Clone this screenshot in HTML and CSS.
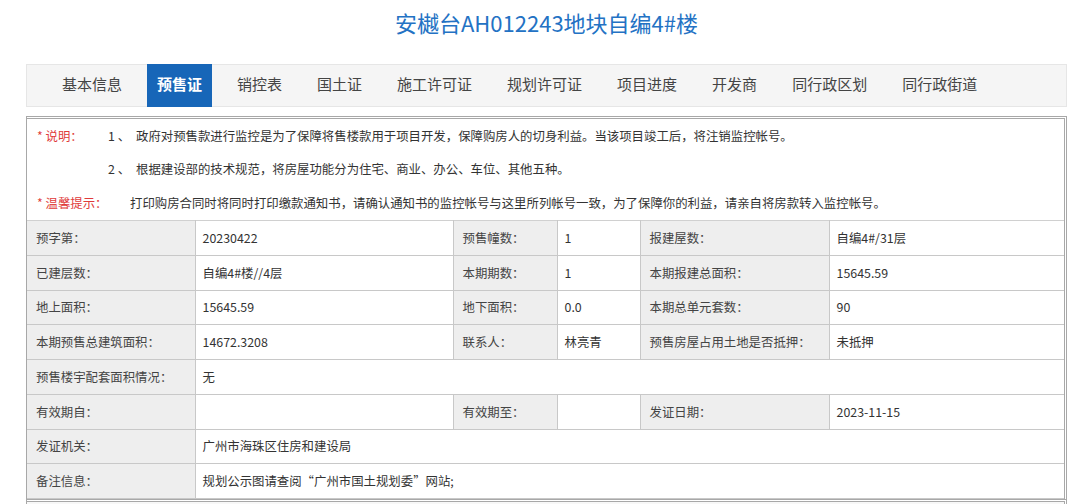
FILE: index.html
```html
<!DOCTYPE html>
<html lang="zh-CN">
<head>
<meta charset="utf-8">
<title>安樾台AH012243地块自编4#楼</title>
<link rel="stylesheet" href="styles.css">
</head>
<body>
<div class="page">
  <h1 class="title">安樾台AH012243地块自编4#楼</h1>
  <nav class="tabs">
    <a class="tab">基本信息</a>
    <a class="tab active">预售证</a>
    <a class="tab">销控表</a>
    <a class="tab">国土证</a>
    <a class="tab">施工许可证</a>
    <a class="tab">规划许可证</a>
    <a class="tab">项目进度</a>
    <a class="tab">开发商</a>
    <a class="tab">同行政区划</a>
    <a class="tab">同行政街道</a>
  </nav>
  <div class="panel">
    <div class="notes">
      <div class="note"><span class="note-label">* 说明：</span><span class="note-num">1 、</span><span>政府对预售款进行监控是为了保障将售楼款用于项目开发，保障购房人的切身利益。当该项目竣工后，将注销监控帐号。</span></div>
      <div class="note"><span class="note-label"></span><span class="note-num">2 、</span><span>根据建设部的技术规范，将房屋功能分为住宅、商业、办公、车位、其他五种。</span></div>
      <div class="note"><span class="note-label wide">* 温馨提示：</span><span>打印购房合同时将同时打印缴款通知书，请确认通知书的监控帐号与这里所列帐号一致，为了保障你的利益，请亲自将房款转入监控帐号。</span></div>
    </div>
    <table class="info">
      <colgroup>
        <col class="c1"><col class="c2"><col class="c3"><col class="c4"><col class="c5"><col class="c6">
      </colgroup>
      <tr>
        <th>预字第：</th><td>20230422</td>
        <th>预售幢数：</th><td>1</td>
        <th>报建屋数：</th><td>自编4#/31层</td>
      </tr>
      <tr>
        <th>已建层数：</th><td>自编4#楼//4层</td>
        <th>本期期数：</th><td>1</td>
        <th>本期报建总面积：</th><td>15645.59</td>
      </tr>
      <tr>
        <th>地上面积：</th><td>15645.59</td>
        <th>地下面积：</th><td>0.0</td>
        <th>本期总单元套数：</th><td>90</td>
      </tr>
      <tr>
        <th>本期预售总建筑面积：</th><td>14672.3208</td>
        <th>联系人：</th><td>林亮青</td>
        <th>预售房屋占用土地是否抵押：</th><td>未抵押</td>
      </tr>
      <tr>
        <th>预售楼宇配套面积情况：</th><td colspan="5">无</td>
      </tr>
      <tr>
        <th>有效期自：</th><td></td>
        <th>有效期至：</th><td></td>
        <th>发证日期：</th><td>2023-11-15</td>
      </tr>
      <tr>
        <th>发证机关：</th><td colspan="5">广州市海珠区住房和建设局</td>
      </tr>
      <tr>
        <th>备注信息：</th><td colspan="5">规划公示图请查阅“广州市国土规划委”网站;</td>
      </tr>
    </table>
  </div>
  <div class="panel next">
    <div class="next-row"><span class="next-label"></span></div>
  </div>
</div>
</body>
</html>
```
FILE: styles.css
```css
* { box-sizing: border-box; }
html, body {
  margin: 0;
  padding: 0;
  background: #ffffff;
}
body {
  font-family: "Noto Sans CJK SC", "Noto Sans", "Liberation Sans", sans-serif;
  color: #333333;
}
.page {
  width: 1041px;
  margin-left: 26px;
}
.title {
  margin: 0;
  height: 64px;
  padding-top: 6px;
  text-align: center;
  font-size: 22px;
  font-weight: normal;
  line-height: 32px;
  color: #2372c4;
}
.tabs {
  display: flex;
  gap: 15px;
  height: 43px;
  padding-left: 25px;
  background: #f5f5f5;
  border: 1px solid #e6e6e6;
}
.tab {
  display: flex;
  align-items: center;
  padding: 0 10px 4px;
  margin-top: -1px;
  margin-bottom: -1px;
  font-size: 15px;
  color: #444444;
  cursor: pointer;
}
.tab.active {
  background: #1766b8;
  color: #ffffff;
  font-weight: bold;
}
.panel {
  margin-top: 9px;
  border-left: 1px solid #a8a8a8;
  border-right: 3px double #a8a8a8;
  border-top: 3px double #a8a8a8;
}
.notes {
  padding: 0 0 0 10px;
  height: 101px;
  font-size: 12.4px;
  color: #333333;
}
.note {
  display: flex;
  height: 33px;
  align-items: center;
}
.note:nth-child(3) { height: 35px; }
.note-label {
  color: #e03a3a;
  width: 71px;
  flex: none;
}
.note-label.wide { width: 93px; }
.note-num {
  width: 28px;
  flex: none;
}
.info {
  width: 100%;
  border-collapse: collapse;
  table-layout: fixed;
  font-size: 12.4px;
}
.c1 { width: 168px; }
.c2 { width: 258px; }
.c3 { width: 104px; }
.c4 { width: 83px; }
.c5 { width: 189px; }
.c6 { width: auto; }
.info tr { height: 34.75px; }
.info th, .info td {
  border: 1px solid #c8c8c8;
  padding: 0 8px;
  text-align: left;
  font-weight: normal;
  white-space: nowrap;
  overflow: hidden;
}
.info th {
  background: #eeeeee;
  color: #444444;
  padding-left: 9px;
}
.info td {
  background: #ffffff;
  color: #333333;
  padding-left: 7px;
}
.info tr:first-child th, .info tr:first-child td { border-top-color: #d0d0d0; }
.info th:first-child, .info td:first-child { border-left: none; }
.info tr > *:last-child { border-right: none; }
.panel.next {
  margin-top: 0;
  border-top: 3px double #a8a8a8;
  height: 40px;
}
.next-row {
  height: 40px;
  background: #f8f8f8;
}
```
